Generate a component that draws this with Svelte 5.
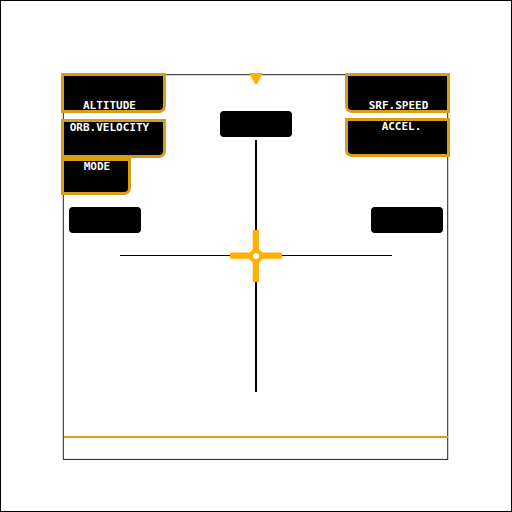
<script>
  const left = [
    { id: 'altitude', label: 'ALTITUDE' },
    { id: 'orbital', label: 'ORB.VELOCITY' },
    { id: 'mode', label: 'MODE' }
  ];
  const right = [
    { id: 'surface', label: 'SRF.SPEED' },
    { id: 'accel', label: 'ACCEL.' }
  ];
</script>

<main class="screen">
  <section class="hud" aria-label="Flight display">
    <svg class="reticle" viewBox="0 0 389 389" aria-hidden="true">
      <rect x="2.3" y="1.7" width="384.4" height="384.7" fill="none" stroke="#222" />
      <path d="M188 0h14l-6 11h-2z" fill="#ffb000" />
      <path d="M59 182.5h272" stroke="#000" />
      <path d="M195 67v252" stroke="#000" stroke-width="2" />
      <path d="M3 364h384" stroke="#d89e18" stroke-width="2" />
      <path d="M169 182.7h52M194.8 157v52" stroke="#ffb000" stroke-width="6.2" />
      <circle cx="195" cy="183" r="5" fill="#fff" stroke="#ffb000" stroke-width="4" />
    </svg>

    <div class="top">
      <div class="stack">
        {#each left as item}
          <div class="panel {item.id}">{item.label}</div>
        {/each}
      </div>
      <div class="readout heading"></div>
      <div class="stack end">
        {#each right as item}
          <div class="panel {item.id}">{item.label}</div>
        {/each}
      </div>
    </div>

    <div class="sides">
      <div class="readout"></div>
      <div class="readout"></div>
    </div>
  </section>
</main>

<style>
  .screen {
    box-sizing: border-box;
    min-height: 100vh;
    padding: 72px 61px 48px 60px;
    border: 1px solid #000;
    background: #fff;
    font: bold 11px/12px "DejaVu Sans Mono", monospace;
  }
  .hud {
    position: relative;
    aspect-ratio: 1;
  }
  .reticle {
    position: absolute;
    inset: 0;
    width: 100%;
    height: 100%;
  }
  .top {
    position: relative;
    display: grid;
    grid-template-columns: 1fr auto 1fr;
    align-items: start;
  }
  .stack {
    display: flex;
    flex-direction: column;
    align-items: flex-start;
  }
  .end {
    align-items: flex-end;
  }
  .panel {
    box-sizing: border-box;
    width: 105px;
    height: 39px;
    border: 3px solid #d89e18;
    border-radius: 0 0 7px 0;
    background: #000;
    color: #fff;
    text-align: center;
  }
  .end .panel {
    border-radius: 0 0 0 7px;
  }
  .altitude,
  .surface {
    height: 40px;
    padding-top: 24px;
  }
  .altitude,
  .orbital {
    padding-right: 8px;
  }
  .altitude {
    margin-bottom: 6px;
  }
  .mode {
    width: 70px;
    height: 37px;
    padding-left: 2px;
  }
  .surface {
    margin-bottom: 5px;
    padding-left: 2px;
  }
  .accel {
    padding-left: 8px;
  }
  .readout {
    width: 72px;
    height: 26px;
    border-radius: 4px;
    background: #000;
  }
  .heading {
    margin-top: 38px;
  }
  .sides {
    position: relative;
    display: flex;
    justify-content: space-between;
    margin-top: 12px;
    padding: 0 7px 0 8px;
  }
</style>
